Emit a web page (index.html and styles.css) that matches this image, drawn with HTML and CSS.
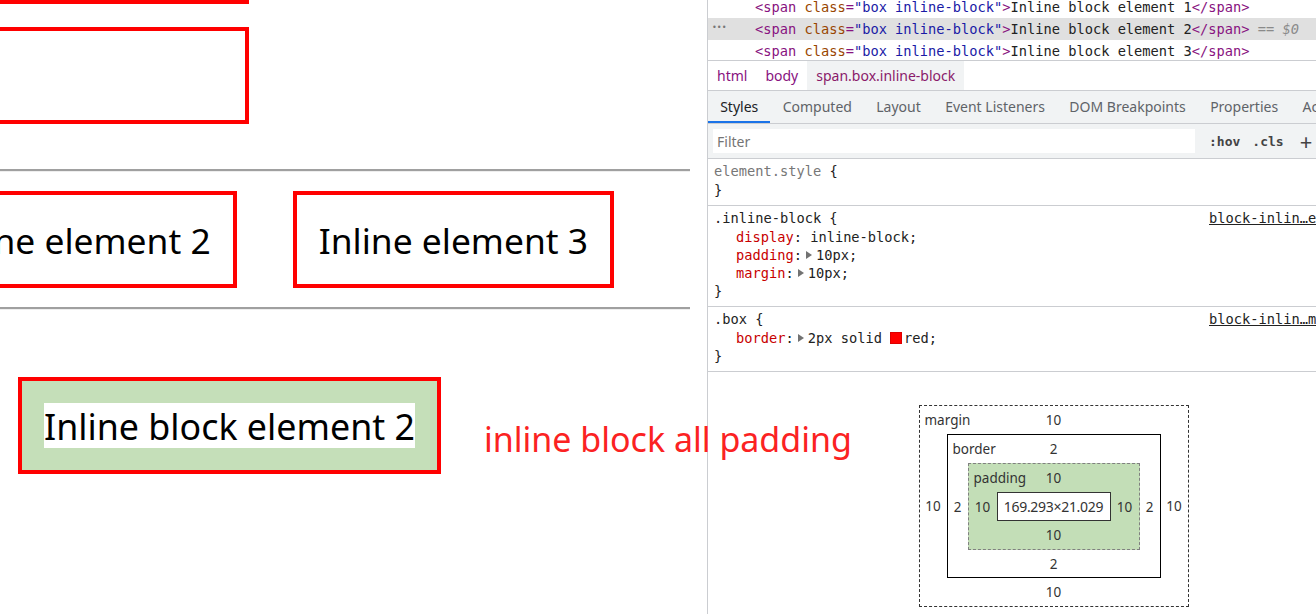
FILE: index.html
```html
<!DOCTYPE html>
<html>
<head>
<meta charset="utf-8">
<link rel="stylesheet" href="styles.css">
</head>
<body>
<div class="page">
  <div class="blk blk1"></div>
  <div class="blk blk2"></div>
  <hr class="rule">
  <div class="inline-row">
    <span class="ibox">Inline element 2</span>
    <span class="ibox">Inline element 3</span>
  </div>
  <hr class="rule rule2">
  <div class="ib-row">
    <span class="ibox green"><span class="ib-content">Inline block element 2</span></span>
  </div>
</div>
<div class="note">inline block all padding</div>
<div class="devtools">
  <div class="dom">
    <div class="dom-rows">
      <div class="dom-row"><span class="tag">&lt;span</span> <span class="an">class</span><span class="tag">=</span><span class="av">"box inline-block"</span><span class="tag">&gt;</span>Inline block element 1<span class="tag">&lt;/span&gt;</span></div>
      <div class="dom-row sel"><span class="dots">•••</span><span class="tag">&lt;span</span> <span class="an">class</span><span class="tag">=</span><span class="av">"box inline-block"</span><span class="tag">&gt;</span>Inline block element 2<span class="tag">&lt;/span&gt;</span><span class="eq"> == <i>$0</i></span></div>
      <div class="dom-row"><span class="tag">&lt;span</span> <span class="an">class</span><span class="tag">=</span><span class="av">"box inline-block"</span><span class="tag">&gt;</span>Inline block element 3<span class="tag">&lt;/span&gt;</span></div>
    </div>
  </div>
  <div class="crumbs">
    <span class="crumb">html</span>
    <span class="crumb">body</span>
    <span class="crumb active">span.box.inline-block</span>
  </div>
  <div class="tabs">
    <span class="tab on">Styles</span>
    <span class="tab">Computed</span>
    <span class="tab">Layout</span>
    <span class="tab">Event Listeners</span>
    <span class="tab">DOM Breakpoints</span>
    <span class="tab">Properties</span>
    <span class="tab">Accessibility</span>
  </div>
  <div class="filter">
    <div class="filter-input">Filter</div>
    <span class="fbtn">:hov</span>
    <span class="fbtn">.cls</span>
    <span class="fplus">+</span>
  </div>
  <div class="rule-sec">
    <div class="sel-line"><span class="selector grey">element.style <span class="br">{</span></span></div>
    <div class="line">}</div>
  </div>
  <div class="rule-sec">
    <div class="sel-line"><span class="selector">.inline-block {</span><span class="src">block-inlin…element.html:12</span></div>
    <div class="line decl"><span class="pn">display</span>: inline-block;</div>
    <div class="line decl"><span class="pn">padding</span>:<span class="arr"></span>10px;</div>
    <div class="line decl"><span class="pn">margin</span>:<span class="arr"></span>10px;</div>
    <div class="line">}</div>
  </div>
  <div class="rule-sec">
    <div class="sel-line"><span class="selector">.box {</span><span class="src">block-inlin…main.css:1</span></div>
    <div class="line decl"><span class="pn">border</span>:<span class="arr"></span>2px solid <span class="swatch"></span>red;</div>
    <div class="line">}</div>
  </div>
  <div class="bm">
    <div class="bm-box bm-margin">
      <div class="bm-top"><span class="lbl">margin</span><span>10</span><span></span></div>
      <div class="bm-side">10</div>
      <div class="bm-box bm-border">
        <div class="bm-top"><span class="lbl">border</span><span>2</span><span></span></div>
        <div class="bm-side">2</div>
        <div class="bm-box bm-padding">
          <div class="bm-top"><span class="lbl">padding</span><span>10</span><span></span></div>
          <div class="bm-side">10</div>
          <div class="bm-content">169.293×21.029</div>
          <div class="bm-side">10</div>
          <div class="bm-bottom">10</div>
        </div>
        <div class="bm-side">2</div>
        <div class="bm-bottom">2</div>
      </div>
      <div class="bm-side">10</div>
      <div class="bm-bottom">10</div>
    </div>
  </div>
</div>
</body>
</html>
```

FILE: styles.css
```css
* { box-sizing: border-box; }
html, body { margin: 0; padding: 0; }
body {
  width: 1316px;
  height: 614px;
  overflow: hidden;
  display: flex;
  position: relative;
  background: #fff;
  font-family: "Noto Sans", "Open Sans", sans-serif;
}

/* ---------- left page ---------- */
.page {
  width: 707px;
  flex: 0 0 707px;
  overflow: hidden;
  display: flex;
  flex-direction: column;
  align-items: flex-start;
}
.blk {
  border: 4px solid #ff0000;
  height: 97px;
  width: 349px;
  margin-left: -100px;
  flex: 0 0 auto;
}
.blk1 { margin-top: -93px; }
.blk2 { margin-top: 23px; }
.rule {
  width: 790px;
  margin: 45px 0 0 -100px;
  border: 0;
  height: 3px;
  border-top: 2px solid #a0a0a0;
  border-bottom: 1px solid #eeeeee;
  flex: 0 0 auto;
}
.rule2 { margin-top: 19px; }
.inline-row {
  margin-top: 19px;
  width: 614px;
  display: flex;
  justify-content: flex-end;
  gap: 56px;
  flex: 0 0 auto;
}
.ibox {
  display: inline-block;
  flex: 0 0 auto;
  border: 4px solid #ff0000;
  padding: 22px 22px;
  font-size: 35.4px;
  line-height: 47px;
  height: 97px;
  color: #000;
  white-space: nowrap;
}
.ib-row {
  margin-top: 67px;
  margin-left: 18px;
  display: flex;
}
.green {
  background: #c5dfb9;
  padding: 22px;
  font-size: 35.8px;
}
.ib-content {
  display: block;
  background: #fff;
  height: 45px;
  line-height: 47px;
}
.note {
  position: absolute;
  left: 484px;
  top: 417px;
  font-size: 34px;
  line-height: 44px;
  color: #fb2222;
  white-space: nowrap;
}

/* ---------- devtools ---------- */
.devtools {
  flex: 0 0 692px;
  width: 692px;
  border-left: 1px solid #cbcdd1;
  display: flex;
  flex-direction: column;
  color: #222;
  font-size: 14px;
  white-space: nowrap;
}
.dom {
  height: 61px;
  overflow: hidden;
  border-bottom: 1px solid #cbcdd1;
  font-family: "DejaVu Sans Mono", monospace;
  font-size: 13.7px;
}
.dom-rows { margin-top: -4px; }
.dom-row {
  height: 22px;
  line-height: 22px;
  padding-left: 47px;
  position: relative;
  color: #222;
}
.dom-row.sel { background: #e0e0e0; }
.dots {
  position: absolute;
  left: 4px;
  top: -1px;
  font-size: 8px;
  color: #777;
  letter-spacing: 0;
}
.tag { color: #881280; }
.an { color: #994500; }
.av { color: #1a1aa6; }
.eq { color: #8a8a8a; }
.eq i { font-style: italic; }

.crumbs {
  height: 30px;
  border-bottom: 1px solid #cbcdd1;
  display: flex;
  align-items: stretch;
}
.crumb {
  padding: 0 9px;
  line-height: 30px;
  color: #881280;
}
.crumb.active { background: #f1f3f4; color: #8a1a6a; }

.tabs {
  height: 33px;
  background: #f1f3f4;
  border-bottom: 1px solid #cbcdd1;
  display: flex;
}
.tab {
  padding: 0 12.2px;
  line-height: 32px;
  font-size: 14px;
  color: #5f6368;
  border-bottom: 2px solid transparent;
}
.tab.on { color: #202124; border-bottom-color: #1a73e8; }

.filter {
  height: 35px;
  background: #f1f3f4;
  border-bottom: 1px solid #cbcdd1;
  display: flex;
  align-items: center;
  padding: 0 5px;
}
.filter-input {
  width: 482px;
  height: 24px;
  background: #fff;
  color: #757575;
  line-height: 25px;
  padding-left: 4px;
}
.fbtn {
  font-family: "DejaVu Sans Mono", monospace;
  font-weight: bold;
  font-size: 13px;
  color: #444;
  margin-left: 14px;
}
.fbtn + .fbtn { margin-left: 12px; }
.fplus {
  font-size: 22px;
  color: #444;
  margin-left: 16px;
  line-height: 24px;
}

.rule-sec {
  padding: 2px 0 6px 6px;
  border-bottom: 1px solid #cbcdd1;
  font-family: "DejaVu Sans Mono", monospace;
  font-size: 13.7px;
  color: #222;
}
.sel-line {
  height: 20px;
  line-height: 20px;
  display: flex;
}
.selector { flex: 0 0 495px; }
.selector.grey { color: #777; }
.br { color: #222; }
.src {
  color: #222;
  text-decoration: underline;
}
.line { height: 18px; line-height: 19px; }
.decl { padding-left: 22px; }
.pn { color: #c80000; }
.arr {
  display: inline-block;
  width: 0;
  height: 0;
  border-left: 6px solid #727272;
  border-top: 4px solid transparent;
  border-bottom: 4px solid transparent;
  margin: 0 4px 0 4px;
  vertical-align: 1px;
}
.swatch {
  display: inline-block;
  width: 12px;
  height: 12px;
  background: #ff0000;
  border: 1px solid #d00;
  margin: 0 2px 0 0;
  vertical-align: -1px;
}

/* box model */
.bm {
  padding-top: 33px;
  display: flex;
  justify-content: center;
  font-size: 13.5px;
  color: #333;
}
.bm-box {
  display: grid;
  grid-template-rows: 28px auto 28px;
  align-items: center;
}
.bm-margin {
  border: 1px dashed #333;
  grid-template-columns: 27px auto 27px;
  grid-template-rows: 28px auto 28px;
  width: 270px;
}
.bm-border {
  border: 1px solid #000;
  background: #fff;
  grid-template-columns: 20px auto 20px;
  grid-template-rows: 28px auto 27px;
}
.bm-padding {
  border: 1px dashed #808080;
  background: #c3deb7;
  grid-template-columns: 28px auto 28px;
  grid-template-rows: 28px auto 28px;
}
.bm-top {
  grid-column: 1 / -1;
  display: grid;
  grid-template-columns: 1fr auto 1fr;
  padding: 0 5px;
  line-height: 22px;
}
.lbl { text-align: left; }
.bm-side { text-align: center; line-height: 20px; }
.bm-bottom {
  grid-column: 1 / -1;
  text-align: center;
  line-height: 22px;
}
.bm-content {
  background: #fff;
  border: 1px solid #333;
  width: 114px;
  height: 29px;
  line-height: 28px;
  text-align: center;
  font-size: 14px;
  letter-spacing: -0.3px;
}
```
